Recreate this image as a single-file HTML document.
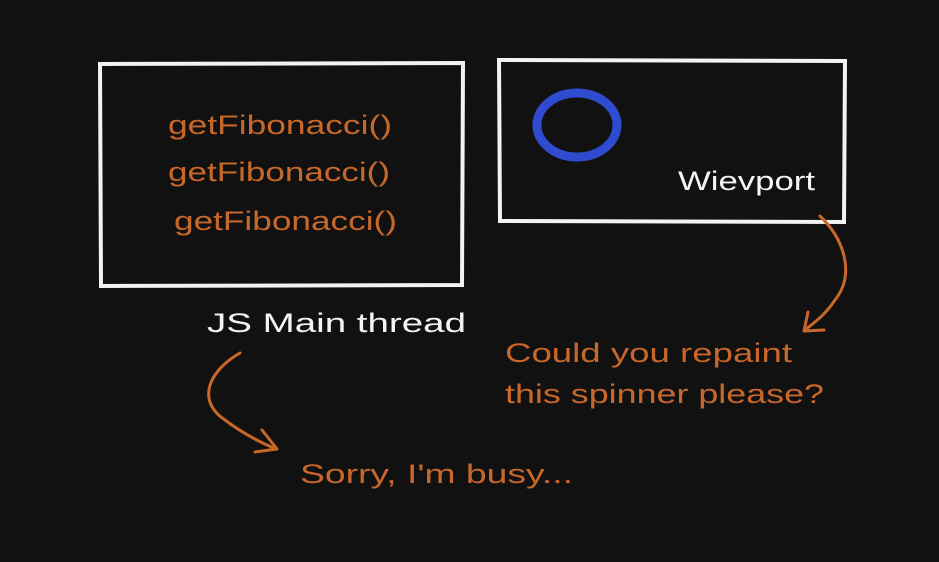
<!DOCTYPE html>
<html><head><style>
html,body{margin:0;padding:0;background:#121111;}
svg{display:block}
text{font-family:"Liberation Sans",sans-serif;}
</style></head><body>
<svg width="939" height="562" viewBox="0 0 939 562" xmlns="http://www.w3.org/2000/svg">
<rect width="939" height="562" fill="#121111"/>
<g fill="none" stroke="#f2f2f2" stroke-width="4" stroke-linecap="round">
<path d="M100 64 L463 63 L462 285 L101 286 Z"/>
<path d="M499 60 L845 61 L844 222 L500 221 Z"/>
</g>
<ellipse cx="577" cy="125" rx="40" ry="32" fill="none" stroke="#2f4cd0" stroke-width="9"/>
<g fill="#c8672a" font-size="27">
<text x="168" y="134" textLength="224" lengthAdjust="spacingAndGlyphs">getFibonacci()</text>
<text x="168" y="181" textLength="222" lengthAdjust="spacingAndGlyphs">getFibonacci()</text>
<text x="174" y="230" textLength="223" lengthAdjust="spacingAndGlyphs">getFibonacci()</text>
<text x="505" y="362" textLength="287" lengthAdjust="spacingAndGlyphs">Could you repaint</text>
<text x="505" y="403" textLength="319" lengthAdjust="spacingAndGlyphs">this spinner please?</text>
<text x="300" y="483" textLength="273" lengthAdjust="spacingAndGlyphs">Sorry, I'm busy...</text>
</g>
<g fill="#f4f4f4" font-size="27">
<text x="207" y="332" textLength="259" lengthAdjust="spacingAndGlyphs">JS Main thread</text>
<text x="678" y="190" textLength="137" lengthAdjust="spacingAndGlyphs">Wievport</text>
</g>
<g fill="none" stroke="#c8672a" stroke-width="3" stroke-linecap="round" stroke-linejoin="round">
<path d="M240 353 C210 370 195 400 225 420 C245 435 262 443 276 449"/>
<path d="M262 430 L277 449 L255 452"/>
<path d="M820 216 C845 240 855 275 835 300 C825 315 815 322 805 330"/>
<path d="M808 312 L804 331 L824 330"/>
</g>
</svg>
</body></html>
